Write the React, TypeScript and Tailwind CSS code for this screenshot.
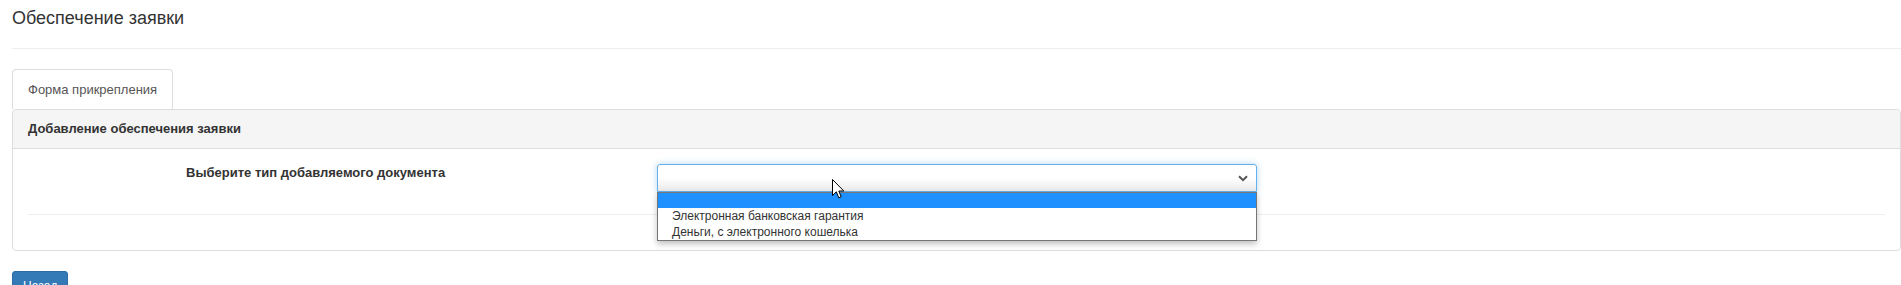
import React from "react";

function Chevron() {
  return (
    <svg width="10" height="7" viewBox="0 0 10 7" fill="none">
      <path d="M1 1.2 L5 5.2 L9 1.2" stroke="#555" strokeWidth="2" fill="none" />
    </svg>
  );
}

function Cursor() {
  return (
    <svg width="13" height="21" viewBox="0 0 13 21">
      <path
        d="M0.5 0.5 L0.5 16.5 L4.3 12.8 L6.8 18.8 L9.2 17.8 L6.8 12 L11.8 12 Z"
        fill="#fff"
        stroke="#000"
        strokeWidth="1"
        strokeLinejoin="round"
      />
    </svg>
  );
}

export default function App() {
  return (
    <div className="relative w-[1901px] h-[285px] overflow-hidden bg-white font-['Liberation_Sans',Arial,sans-serif] text-[#333]">
      <div className="pl-3">
        <h3 className="text-[18px] leading-[20px] pt-[8px] pb-[20px] font-normal">Обеспечение заявки</h3>
        <div className="border-t border-[#eee]" />
        <div className="pt-[20px]">
          <div className="w-[161px] h-[40px] border border-b-0 border-[#ddd] rounded-t-[4px] flex items-center pl-[15px] text-[13px] text-[#555]">
            Форма прикрепления
          </div>
        </div>
        <div className="border border-[#ddd] rounded-[4px]">
          <div className="h-[39px] bg-[#f5f5f5] border-b border-[#ddd] flex items-center px-[15px] text-[13px] font-bold text-[#333] rounded-t-[4px]">
            Добавление обеспечения заявки
          </div>
          <div className="px-[15px] pt-[15px] pb-[35px]">
            <div className="flex">
              <div className="w-[629px] pl-[158px] text-[13px] leading-[18px] font-bold text-[#333]">
                Выберите тип добавляемого документа
              </div>
              <div className="relative w-[600px]">
                <div className="h-[28px] border border-[#66afe9] rounded-t-[3px] bg-gradient-to-b from-white via-white to-[#e9e9e9] shadow-[0_0_6px_rgba(102,175,233,0.5)] flex items-center justify-end pr-[8px]">
                  <Chevron />
                </div>
                <div className="absolute left-0 top-[28px] w-[600px] border border-[#767676] bg-white shadow-[0_3px_6px_rgba(0,0,0,0.25)] z-10 text-[12px] text-[#333] leading-[16px]">
                  <div className="h-[15px] bg-[#1e90ff]" />
                  <div className="h-[16px] pl-[14px]">Электронная банковская гарантия</div>
                  <div className="h-[16px] pl-[14px]">Деньги, с электронного кошелька</div>
                </div>
              </div>
            </div>
            <div className="mt-[22px] border-t border-[#eee]" />
          </div>
        </div>
        <div className="pt-[20px]">
          <button className="h-[30px] px-[10px] bg-[#337ab7] border border-[#2e6da4] rounded-[3px] text-white text-[12px] leading-[18px]">
            Назад
          </button>
        </div>
      </div>
      <div className="absolute left-[832px] top-[179px] z-20">
        <Cursor />
      </div>
    </div>
  );
}
